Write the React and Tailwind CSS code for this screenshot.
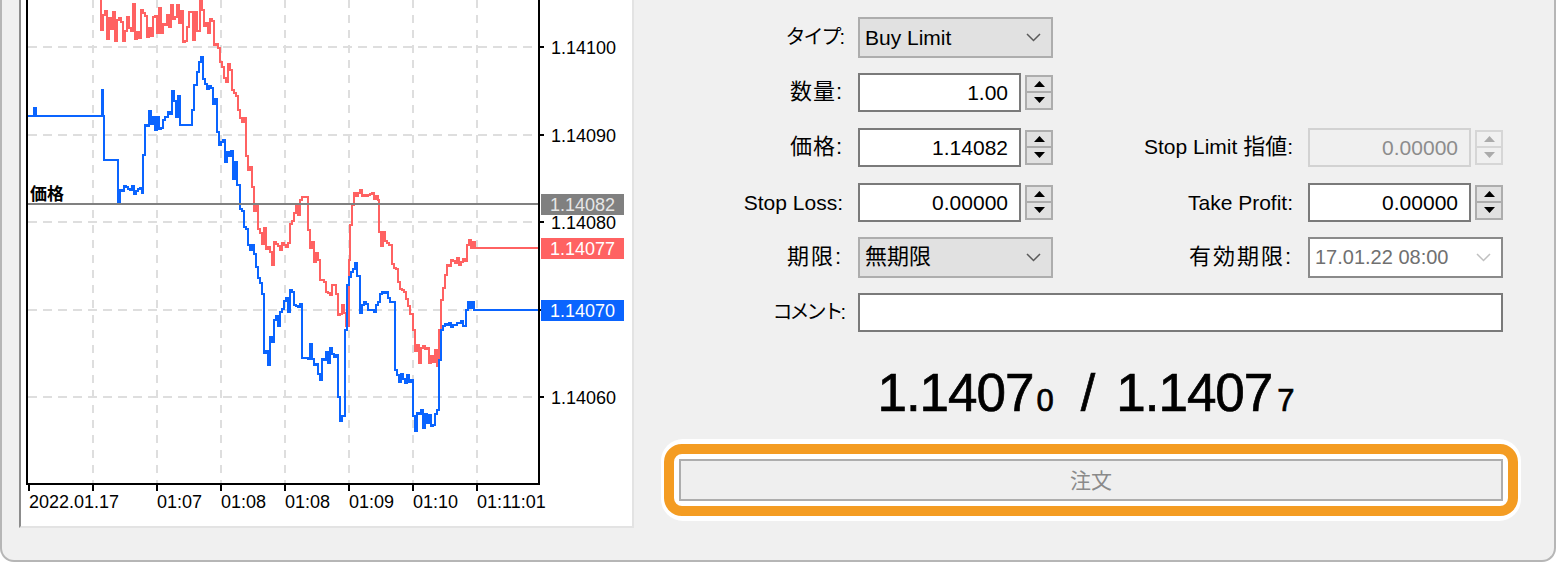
import React from 'react';

// tiny deterministic noise so the tick lines look the same every render
function rnd(seed) {
  let s = seed;
  return () => {
    s = (s * 9301 + 49297) % 233280;
    return s / 233280;
  };
}

// spec: [x, y] = point, [x0, x1, y0, y1, amp] = noisy stretch
function build(spec, seed) {
  const r = rnd(seed);
  const pts = [];
  let last = null;
  const push = (x, y) => {
    if (last && last[0] !== x) pts.push([x, last[1]]);
    pts.push([x, y]);
    last = [x, y];
  };
  for (const s of spec) {
    if (s.length === 2) push(s[0], s[1]);
    else {
      const [x0, x1, y0, y1, amp] = s;
      for (let x = x0; x <= x1; x += 2) {
        const t = (x - x0) / (x1 - x0 || 1);
        const base = y0 + (y1 - y0) * t;
        push(x, Math.round(base + (r() - 0.5) * 2 * amp));
      }
    }
  }
  return pts.map((p) => p.join(',')).join(' ');
}

const bid = build(
  [
    [28, 116], [33, 116], [34, 108], [36, 116], [101, 116], [102, 90], [103, 116], [104, 160], [117, 160], [118, 203],
    [120, 142, 190, 190, 5],
    [143, 155], [145, 125],
    [147, 166, 122, 130, 14],
    [168, 178, 100, 105, 14],
    [180, 125], [190, 125], [192, 110], [194, 85], [197, 72], [199, 62], [201, 57],
    [203, 215, 80, 100, 8],
    [217, 238, 140, 175, 15],
    [240, 256, 210, 268, 12],
    [258, 262, 285, 295, 8],
    [264, 272, 345, 345, 22],
    [274, 300, 320, 290, 16],
    [302, 318, 345, 378, 18],
    [320, 380],
    [322, 336, 356, 356, 8],
    [338, 343, 405, 420, 10],
    [345, 330], [347, 285],
    [349, 358, 270, 270, 10],
    [360, 376, 308, 308, 6],
    [378, 392, 298, 298, 6],
    [395, 370],
    [397, 411, 382, 385, 10],
    [413, 435, 422, 428, 14],
    [437, 410], [439, 360], [441, 330],
    [443, 464, 324, 324, 3],
    [466, 310], [468, 302], [470, 308], [472, 302], [474, 310], [539, 310],
  ],
  7
);

const ask = build(
  [
    [100, -10], [101, 30],
    [103, 198, 22, 25, 20],
    [200, -5], [202, 10],
    [204, 212, 25, 30, 10],
    [214, 219, 40, 45, 6],
    [220, 62],
    [222, 236, 65, 85, 12],
    [238, 244, 115, 125, 8],
    [246, 256, 165, 205, 15],
    [258, 274, 225, 255, 15],
    [276, 292, 250, 230, 12],
    [294, 213], [296, 205], [298, 215], [300, 200], [302, 197], [306, 197], [308, 230],
    [310, 318, 245, 265, 15],
    [320, 280],
    [322, 336, 285, 290, 8],
    [338, 347, 305, 325, 12],
    [349, 260], [350, 225], [352, 205],
    [354, 376, 193, 193, 6],
    [378, 200], [379, 232],
    [381, 390, 238, 250, 10],
    [392, 396, 268, 272, 5],
    [398, 282],
    [400, 404, 292, 296, 5],
    [406, 411, 305, 318, 8],
    [413, 330],
    [415, 437, 358, 365, 15],
    [439, 330], [441, 300], [443, 288], [445, 275],
    [447, 465, 262, 262, 5],
    [467, 245], [469, 240], [471, 248], [473, 242], [475, 248], [539, 248],
  ],
  3
);

const gridY = [47, 135, 222, 310, 397];
const gridX = [93, 157, 221, 285, 349, 413, 477];
const times = [
  [29, '2022.01.17'],
  [157, '01:07'],
  [221, '01:08'],
  [285, '01:08'],
  [349, '01:09'],
  [413, '01:10'],
  [477, '01:11:01'],
];
const prices = [
  [47, '1.14100'],
  [135, '1.14090'],
  [222, '1.14080'],
  [397, '1.14060'],
];

function Chart() {
  return (
    <svg width="611" height="526" viewBox="21 0 611 526" shapeRendering="crispEdges">
      <defs>
        <clipPath id="plot">
          <rect x="28" y="0" width="511" height="484" />
        </clipPath>
      </defs>
      {gridY.map((y) => (
        <line key={y} x1="28" x2="539" y1={y} y2={y} stroke="#dedede" strokeWidth="2" strokeDasharray="9 6" />
      ))}
      {gridX.map((x) => (
        <line key={x} x1={x} x2={x} y1="0" y2="484" stroke="#dedede" strokeWidth="2" strokeDasharray="8 7" />
      ))}
      <g clipPath="url(#plot)">
        <polyline points={ask} fill="none" stroke="#ff6262" strokeWidth="2" />
        <polyline points={bid} fill="none" stroke="#0a64ff" strokeWidth="2" />
        <line x1="28" x2="539" y1="204" y2="204" stroke="#808080" strokeWidth="2" />
      </g>
      <text x="30" y="200" fontSize="17" fontWeight="700" fontFamily="'Noto Sans CJK JP', sans-serif" fill="#000">
        価格
      </text>
      {/* axes */}
      <line x1="27" x2="27" y1="0" y2="485" stroke="#000" strokeWidth="2" />
      <line x1="26" x2="540" y1="484" y2="484" stroke="#000" strokeWidth="2" />
      <line x1="539" x2="539" y1="0" y2="485" stroke="#000" strokeWidth="2" />
      {gridY.map((y) => (
        <line key={y} x1="539" x2="544" y1={y} y2={y} stroke="#000" strokeWidth="2" />
      ))}
      {[29, ...gridX].map((x) => (
        <line key={x} x1={x} x2={x} y1="484" y2="491" stroke="#000" strokeWidth="2" />
      ))}
      <g fontFamily="'Liberation Sans', sans-serif" fontSize="18" fill="#000">
        {prices.map(([y, t]) => (
          <text key={t} x="551" y={y + 6.5}>
            {t}
          </text>
        ))}
        {times.map(([x, t], i) => (
          <text key={i} x={x} y="508">
            {t}
          </text>
        ))}
      </g>
      <rect x="541" y="194" width="83" height="21" fill="#808080" />
      <rect x="541" y="238" width="83" height="21" fill="#ff6262" />
      <rect x="541" y="300" width="83" height="21" fill="#0a64ff" />
      <g fontFamily="'Liberation Sans', sans-serif" fontSize="18">
        <text x="550" y="211" fill="#e6e6e6">1.14082</text>
        <text x="550" y="255" fill="#fff">1.14077</text>
        <text x="550" y="317" fill="#fff">1.14070</text>
      </g>
    </svg>
  );
}

function Label({ children, className = 'text-[21px]' }) {
  return <div className={`self-center text-right leading-none text-black ${className}`}>{children}</div>;
}

function Spinner({ disabled }) {
  const box = disabled ? 'border-[#d6d6d6] bg-[#f0f0f0]' : 'border-[#adadad] bg-[#e1e1e1]';
  const mid = disabled ? 'bg-[#d6d6d6]' : 'bg-[#adadad]';
  const fill = disabled ? '#ababab' : '#000';
  return (
    <div className={`ml-[4px] flex h-[35px] w-[28px] flex-col border-2 ${box}`}>
      <div className="flex flex-1 items-center justify-center">
        <svg width="11" height="6" viewBox="0 0 11 6">
          <polygon points="0,6 5.5,0 11,6" fill={fill} />
        </svg>
      </div>
      <div className={`h-[2px] ${mid}`} />
      <div className="flex flex-1 items-center justify-center">
        <svg width="11" height="6" viewBox="0 0 11 6">
          <polygon points="0,0 11,0 5.5,6" fill={fill} />
        </svg>
      </div>
    </div>
  );
}

function Edit({ value, disabled }) {
  const box = disabled ? 'border-[#d2d2d2] bg-[#f0f0f0] text-[#8c8c8c]' : 'border-[#7a7a7a] bg-white text-black';
  return (
    <div className="flex items-center">
      <div className={`flex h-[39px] w-[163px] items-center justify-end border-2 pr-[11px] text-[21px] leading-none ${box}`}>
        {value}
      </div>
      <Spinner disabled={disabled} />
    </div>
  );
}

function Chevron({ color }) {
  return (
    <svg width="15" height="9" viewBox="0 0 15 9">
      <path d="M1 1 L7.5 7.5 L14 1" fill="none" stroke={color} strokeWidth="1.5" />
    </svg>
  );
}

function Combo({ children, muted }) {
  const box = muted ? 'border-[#8a8a8a] bg-white text-[#707070]' : 'border-[#adadad] bg-[#e1e1e1] text-black';
  return (
    <div className={`flex h-[41px] w-[195px] items-center justify-between self-center border-2 pl-[5px] pr-[10px] leading-none ${box}`}>
      {children}
      <Chevron color={muted ? '#c0c0c0' : '#5a5a5a'} />
    </div>
  );
}

export default function App() {
  return (
    <div className="h-[562px] w-[1556px] overflow-hidden bg-white font-['Liberation_Sans','Noto_Sans_CJK_JP',sans-serif]">
      <div className="flex h-[562px] rounded-b-[14px] border-x-2 border-b-2 border-[#b6b6b6] bg-[#f0f0f0]">
        {/* chart panel */}
        <div className="ml-[17px] h-[528px] w-[615px] border-b-2 border-l-2 border-r-2 border-b-[#e3e3e3] border-l-[#8c8c8c] border-r-[#e3e3e3] bg-white">
          <Chart />
        </div>

        {/* order form */}
        <div className="flex flex-1 flex-col">
          <div className="grid auto-rows-[40px] grid-cols-[195px_195px_225px_195px] gap-x-[15px] gap-y-[15px] pl-[14px] pt-[17px]">
            <Label className="text-[20px] tracking-[-2px]">タイプ:</Label>
            <Combo>
              <span className="text-[21px]">Buy Limit</span>
            </Combo>
            <div />
            <div />

            <Label className="text-[22px] tracking-[1px]">数量:</Label>
            <Edit value="1.00" />
            <div />
            <div />

            <Label className="text-[22px] tracking-[1px]">価格:</Label>
            <Edit value="1.14082" />
            <Label>
              Stop Limit <span className="text-[22px]">指値</span>:
            </Label>
            <Edit value="0.00000" disabled />

            <Label>Stop Loss:</Label>
            <Edit value="0.00000" />
            <Label>Take Profit:</Label>
            <Edit value="0.00000" />

            <Label className="text-[22px] tracking-[2px]">期限:</Label>
            <Combo>
              <span className="text-[22px]">無期限</span>
            </Combo>
            <Label className="text-[22px] tracking-[2px]">有効期限:</Label>
            <Combo muted>
              <span className="text-[20px]">17.01.22 08:00</span>
            </Combo>

            <Label className="text-[20px] tracking-[-3px]">コメント:</Label>
            <div className="col-span-3 h-[39px] self-center border-2 border-[#7a7a7a] bg-white" />
          </div>

          <div className="ml-[27px] mt-[35px] flex h-[52px] w-[860px] items-baseline justify-center pr-[10px] leading-[52px] text-black [-webkit-text-stroke:0.7px_#000]">
            <span className="text-[53px] tracking-[-1px]">1.1407</span>
            <span className="ml-[3px] text-[31px]">0</span>
            <span className="ml-[27px] mr-[21px] text-[52px]">/</span>
            <span className="text-[53px] tracking-[-1px]">1.1407</span>
            <span className="ml-[5px] text-[31px]">7</span>
          </div>

          <div className="ml-[27px] mt-[20px] w-[860px] rounded-[22px] bg-white px-[3px] py-[5px]">
            <div className="rounded-[18px] border-[10px] border-[#f49c22] bg-white p-[5px]">
              <div className="flex h-[42px] items-center justify-center border-2 border-[#adadad] bg-[#efefef] text-[21px] leading-none text-[#8a8a8a]">
                注文
              </div>
            </div>
          </div>
        </div>
      </div>
    </div>
  );
}
